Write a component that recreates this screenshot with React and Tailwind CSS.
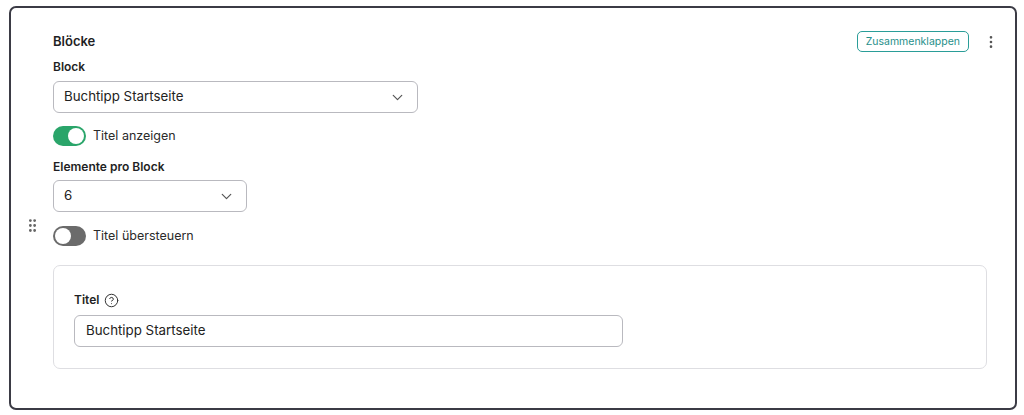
import { ChevronDown, EllipsisVertical, CircleHelp, GripVertical } from 'lucide-react'

function Toggle({ on, label }) {
  return (
    <div className="flex items-center gap-[7px] h-5">
      <div
        className={
          on
            ? 'w-[33px] h-5 rounded-full bg-[#2aa56a] flex items-center justify-end px-[2px]'
            : 'w-[33px] h-5 rounded-full bg-[#6b6b6b] flex items-center justify-start px-[2px]'
        }
      >
        <div className="w-4 h-4 rounded-full bg-white" />
      </div>
      <span className="text-[12.5px] text-[#2b2b2b]">{label}</span>
    </div>
  )
}

function Select({ value, width }) {
  return (
    <div
      className={`${width} h-[32px] border border-[#b9b9bf] rounded-[6px] flex items-center justify-between pl-[10px] pr-[11px]`}
    >
      <span className="text-[13.3px] text-[#222]">{value}</span>
      <ChevronDown size={17} strokeWidth={1.7} className="text-[#555]" />
    </div>
  )
}

export default function App() {
  return (
    <div className="w-[1024px] h-[415px] bg-white pt-[6px] pl-[9px]" style={{ fontFamily: 'Inter, "Liberation Sans", sans-serif' }}>
      <div className="w-[1008px] h-[404px] border-2 border-[#3b3b45] rounded-[7px] flex">
        <div className="w-[42px] pt-[209px] flex justify-center">
          <GripVertical size={17} className="text-[#666]" />
        </div>
        <div className="flex-1 pt-[23px] pr-[16px]">
          <div className="flex items-center justify-between h-[21px]">
            <span className="text-[13px] font-semibold text-[#1f1f24]">Blöcke</span>
            <div className="flex items-center gap-[14px]">
              <button className="h-[21px] px-[8px] border border-[#2a9d98] rounded-[5px] text-[10.5px] text-[#1f8f8a]">
                Zusammenklappen
              </button>
              <EllipsisVertical size={16} className="text-[#555]" />
            </div>
          </div>
          <div className="mt-[7px] text-[12px] font-semibold text-[#1f1f24] leading-[16px]">Block</div>
          <div className="mt-[6px]">
            <Select value="Buchtipp Startseite" width="w-[365px]" />
          </div>
          <div className="mt-[13px]">
            <Toggle on label="Titel anzeigen" />
          </div>
          <div className="mt-[13px] text-[12px] font-semibold text-[#1f1f24] leading-[16px]">Elemente pro Block</div>
          <div className="mt-[5px]">
            <Select value="6" width="w-[194px]" />
          </div>
          <div className="mt-[14px]">
            <Toggle on={false} label="Titel übersteuern" />
          </div>
          <div className="mt-[19px] w-[934px] h-[104px] border border-[#dedee2] rounded-[7px] pt-[26px] pl-[20px]">
            <div className="flex items-center gap-[5px] h-4">
              <span className="text-[12px] font-semibold text-[#1f1f24]">Titel</span>
              <CircleHelp size={15} strokeWidth={1.6} className="text-[#333]" />
            </div>
            <div className="mt-[7px] w-[549px] h-[32px] border border-[#b9b9bf] rounded-[6px] flex items-center pl-[11px]">
              <span className="text-[13.3px] text-[#222]">Buchtipp Startseite</span>
            </div>
          </div>
        </div>
      </div>
    </div>
  )
}
